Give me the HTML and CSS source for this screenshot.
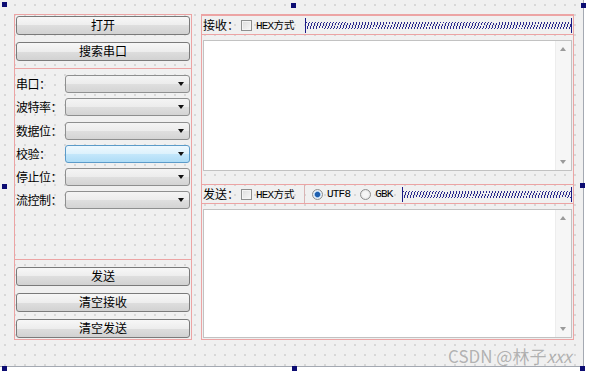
FILE: index.html
```html
<!DOCTYPE html>
<html lang="zh-CN">
<head>
<meta charset="utf-8">
<title>串口助手</title>
<link rel="stylesheet" href="styles.css">
</head>
<body>
<div class="stage">
  <div class="form">
    <div class="left">
      <div class="btn">打开</div>
      <div class="btn">搜索串口</div>
      <div class="group">
        <div class="row"><span class="lbl">串口：</span><div class="combo"><i class="arrow"></i></div></div>
        <div class="row"><span class="lbl">波特率：</span><div class="combo"><i class="arrow"></i></div></div>
        <div class="row"><span class="lbl">数据位：</span><div class="combo"><i class="arrow"></i></div></div>
        <div class="row"><span class="lbl">校验：</span><div class="combo combo-hover"><i class="arrow"></i></div></div>
        <div class="row"><span class="lbl">停止位：</span><div class="combo"><i class="arrow"></i></div></div>
        <div class="row"><span class="lbl">流控制：</span><div class="combo"><i class="arrow"></i></div></div>
      </div>
      <div class="btn">发送</div>
      <div class="btn">清空接收</div>
      <div class="btn">清空发送</div>
    </div>
    <div class="right">
      <div class="bar">
        <div class="head">
          <span class="blbl">接收：</span><span class="check"></span><span class="opt"><span class="lat">HEX</span>方式</span>
        </div>
        <div class="spacer"></div>
      </div>
      <div class="edit edit-recv">
        <div class="sb"><i class="up"></i><i class="down"></i></div>
      </div>
      <div class="bar">
        <div class="head head-sep">
          <span class="blbl">发送：</span><span class="check"></span><span class="opt"><span class="lat">HEX</span>方式</span>
        </div>
        <div class="radios">
          <span class="radio on"></span><span class="lat rtxt">UTF8</span>
          <span class="radio radio2"></span><span class="lat rtxt">GBK</span>
        </div>
        <div class="spacer"></div>
      </div>
      <div class="edit edit-send">
        <div class="sb"><i class="up"></i><i class="down"></i></div>
      </div>
    </div>
  </div>
  <i class="handle h-tl"></i><i class="handle h-tm"></i><i class="handle h-tr"></i>
  <i class="handle h-ml"></i><i class="handle h-mr"></i>
  <i class="handle h-bl"></i><i class="handle h-bm"></i><i class="handle h-br"></i>
  <div class="watermark">CSDN @林子<span class="wx">xxx</span></div>
</div>
</body>
</html>
```
FILE: styles.css
```css
* { box-sizing: border-box; }
html, body { margin: 0; padding: 0; background: #fff; }
body {
  font-family: "Noto Sans CJK SC", "Liberation Sans", sans-serif;
  font-size: 12px;
  color: #000;
}
.stage {
  position: relative;
  width: 590px;
  height: 374px;
  overflow: hidden;
  background: #fff;
}
.form {
  width: 584px;
  height: 367px;
  background-color: #f0f0f0;
  background-image: radial-gradient(circle at 5px 5px, #c9c9c9 0.6px, transparent 0.9px);
  background-size: 10px 10px;
  border-right: 1px solid #a4a9b2;
  border-bottom: 1px solid #a4a9b2;
  display: flex;
  align-items: flex-start;
  gap: 9px;
  padding: 14px 0 0 14px;
}

/* left column */
.left {
  width: 178px;
  height: 326px;
  border: 1px solid #eca4a4;
  padding: 1px;
  display: flex;
  flex-direction: column;
  gap: 7px;
}
.btn {
  height: 19px;
  border: 1px solid #7a7a7a;
  border-radius: 3px;
  background: linear-gradient(#f7f7f7, #ededed 50%, #dedede 50%, #d2d2d2);
  text-align: center;
  line-height: 16px;
  font-size: 12px;
  flex: none;
}
.group {
  height: 192px;
  margin: 0 -2px;
  border: 1px solid #eca4a4;
  padding: 6px 1px 0 1px;
  display: flex;
  flex-direction: column;
  gap: 5.3px;
  flex: none;
}
.row {
  display: flex;
  align-items: center;
  height: 18px;
}
.lbl {
  width: 49px;
  flex: none;
  line-height: 18px;
  white-space: nowrap;
  letter-spacing: -0.5px;
}
.combo {
  position: relative;
  width: 125px;
  height: 18px;
  border: 1px solid #8e8f8f;
  border-radius: 3px;
  background: linear-gradient(#f4f4f4, #ececec 50%, #dfdfdf 50%, #d4d4d4);
}
.combo-hover {
  border-color: #5b9bc9;
  background: linear-gradient(#eef8fe, #dcf1fc 50%, #c4e7fb 50%, #aedcf6);
}
.arrow {
  position: absolute;
  right: 5px;
  top: 6px;
  width: 0;
  height: 0;
  border-left: 3.5px solid transparent;
  border-right: 3.5px solid transparent;
  border-top: 4px solid #111;
}

/* right column */
.right {
  width: 373px;
  height: 326px;
  border: 1px solid #eca4a4;
  display: flex;
  flex-direction: column;
}
.bar {
  height: 20px;
  border-top: 1px solid #eca4a4;
  border-bottom: 1px solid #eca4a4;
  display: flex;
  align-items: center;
  flex: none;
}
.bar + .edit { margin-top: 5px; }
.edit-recv + .bar { margin-top: 13px; }
.head {
  width: 103px;
  height: 100%;
  display: flex;
  align-items: center;
  padding-left: 1px;
  flex: none;
}
.head-sep { border-right: 1px solid #d9b4b4; }
.blbl {
  width: 38px;
  flex: none;
  line-height: 18px;
  white-space: nowrap;
}
.check {
  width: 11px;
  height: 11px;
  border: 1px solid #8e8f8f;
  background: linear-gradient(135deg, #dcdcdc, #f8f8f8);
  box-shadow: inset 0 0 0 1px #f4f4f4;
  flex: none;
}
.opt {
  margin-left: 4px;
  font-size: 10.5px;
  line-height: 18px;
  white-space: nowrap;
}
.lat {
  font-family: "Liberation Mono", monospace;
  font-size: 11px;
  letter-spacing: -0.8px;
}
.radios {
  width: 97px;
  height: 100%;
  display: flex;
  align-items: center;
  padding-left: 7px;
  flex: none;
}
.radio {
  width: 11px;
  height: 11px;
  border-radius: 50%;
  border: 1px solid #8e8f8f;
  background: radial-gradient(circle, #f6f6f6 40%, #d8d8d8);
  flex: none;
}
.radio.on {
  background: radial-gradient(circle, #1f5fae 0 2.2px, #7fb2e6 2.8px, #e9f1fa 3.5px, #d8d8d8);
}
.radio2 { margin-left: 10px; }
.rtxt { margin-left: 4px; line-height: 18px; }
.spacer {
  flex: 1;
  height: 15px;
  margin-right: 1px;
  border-left: 1.5px solid #1c1c86;
  border-right: 1.5px solid #1c1c86;
  background-image: repeating-linear-gradient(110deg, #2a2a8e 0 0.9px, transparent 0.9px 2.8px);
  background-size: 100% 7px;
  background-repeat: no-repeat;
  background-position: 0 center;
}
.edit {
  position: relative;
  margin: 0 1px 0 1px;
  border: 1px solid #c2c2c2;
  background: #fff;
  flex: none;
}
.edit-recv { height: 131px; }
.edit-send { height: 129px; }
.sb {
  position: absolute;
  right: 0;
  top: 0;
  bottom: 0;
  width: 16px;
  background: #f6f6f6;
  border-left: 1px solid #ededed;
}
.sb .up, .sb .down {
  position: absolute;
  left: 4px;
  width: 0;
  height: 0;
  border-left: 3px solid transparent;
  border-right: 3px solid transparent;
}
.sb .up { top: 6px; border-bottom: 4px solid #9a9a9a; }
.sb .down { bottom: 6px; border-top: 4px solid #9a9a9a; }

/* designer selection handles */
.handle {
  position: absolute;
  width: 5px;
  height: 5px;
  background: #0c0c72;
}
.h-tl { left: 2px; top: 2px; }
.h-tm { left: 291px; top: 3px; }
.h-tr { left: 581px; top: 3px; }
.h-ml { left: 2px; top: 184px; }
.h-mr { left: 580px; top: 183px; }
.h-bl { left: 2px; top: 366px; }
.h-bm { left: 292px; top: 366px; }
.h-br { left: 580px; top: 366px; }

.watermark {
  position: absolute;
  left: 448px;
  top: 345px;
  font-family: "Noto Sans CJK SC", "Liberation Sans", sans-serif;
  font-size: 17px;
  line-height: 22px;
  color: rgba(150, 150, 150, 0.7);
  white-space: nowrap;
}
.wx { font-style: italic; }
```
